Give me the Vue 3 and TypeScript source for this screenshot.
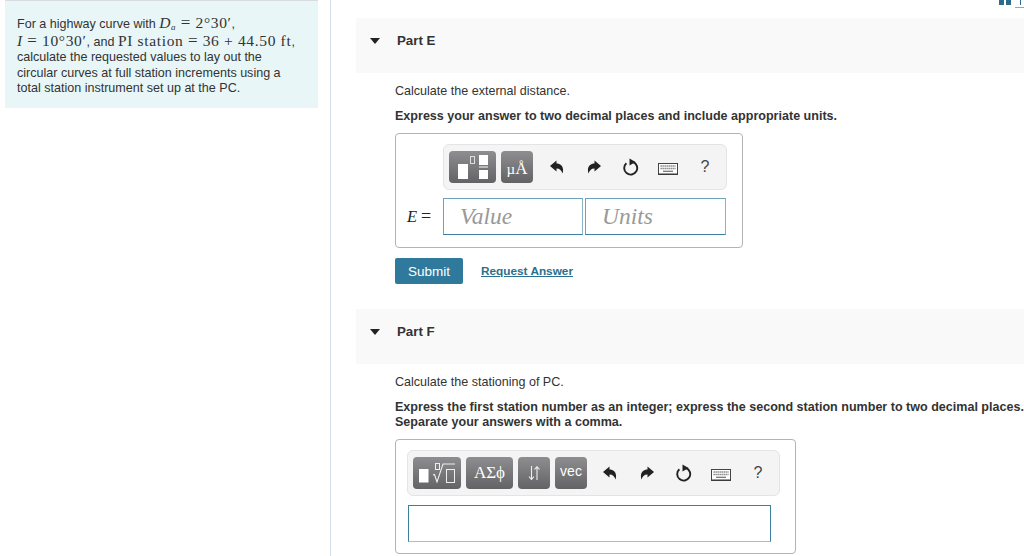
<script setup lang="ts">
interface Tool {
  name: string
}

const actions: Tool[] = [{ name: 'undo' }, { name: 'redo' }, { name: 'reset' }, { name: 'keyboard' }]
</script>

<template>
  <div class="page">
    <aside class="side">
      <div class="intro">
        <p>For a highway curve with <span class="math"><i>D</i><sub><i>a</i></sub><span class="eq">=</span>2°30′</span>,</p>
        <p><span class="math"><i>I</i><span class="eq">=</span>10°30′</span>, and <span class="math">PI station<span class="eq">=</span>36 + 44.50 ft</span>,</p>
        <p>calculate the requested values to lay out the</p>
        <p>circular curves at full station increments using a</p>
        <p>total station instrument set up at the PC.</p>
      </div>
    </aside>

    <main class="main">
      <a class="top-link"><span class="book"></span><span class="top-text"></span></a>

      <section class="part part-e">
        <header class="part-head"><span class="caret"></span><h2>Part E</h2></header>
        <div class="part-body">
          <p class="ask">Calculate the external distance.</p>
          <p class="rule">Express your answer to two decimal places and include appropriate units.</p>

          <div class="answer answer-e">
            <div class="toolbar toolbar-e">
              <button class="tbtn frac-btn" aria-label="templates">
                <svg width="30" height="24" viewBox="0 0 30 24">
                  <rect x="0" y="9" width="10" height="15" fill="#fff" />
                  <rect x="12.500" y="1.500" width="4" height="7" fill="none" stroke="#ddd" stroke-width="1" />
                  <rect x="21" y="0" width="9" height="10" fill="#fff" />
                  <rect x="21" y="11" width="9" height="2" fill="#bbb" />
                  <rect x="21" y="15" width="9" height="9" fill="#fff" />
                </svg>
              </button>
              <button class="tbtn unit-btn"><span class="mu">µ</span><span class="ang">Å</span></button>
              <div class="acts">
                <span v-for="a in actions" :key="a.name" class="act" :class="a.name">
                  <svg v-if="a.name === 'undo'" width="14" height="14" viewBox="0 0 14 14"><path d="M0 6 6.500 0.500V3.500C11 3.500 14.500 7 12.500 13.500C11.500 10.500 10 8.500 6.500 8.500V11.500Z" fill="#222" /></svg>
                  <svg v-else-if="a.name === 'redo'" width="14" height="14" viewBox="0 0 14 14"><path d="M14 6 7.500 0.500V3.500C3 3.500 -0.500 7 1.500 13.500C2.500 10.500 4 8.500 7.500 8.500V11.500Z" fill="#222" /></svg>
                  <svg v-else-if="a.name === 'reset'" width="16" height="18" viewBox="0 0 16 18"><path d="M10 4A6.500 6.500 0 1 1 3.400 5.200" fill="none" stroke="#222" stroke-width="1.900" /><path d="M6.500 0.500 12.500 4 6.500 7.500Z" fill="#222" /></svg>
                  <svg v-else width="20" height="12" viewBox="0 0 20 12"><rect x="0.500" y="0.500" width="19" height="11" fill="#fff" stroke="#444" /><path d="M2.500 3H17.500M2.500 5.500H17.500" stroke="#777" stroke-width="1.300" stroke-dasharray="1.300 0.700" /><path d="M5 8.300H15" stroke="#777" stroke-width="1.300" /><path d="M0.500 11H19.500" stroke="#333" stroke-width="1" /></svg>
                </span>
                <span class="act help">?</span>
              </div>
            </div>
            <div class="entry">
              <span class="var"><i>E</i><span class="var-eq">=</span></span>
              <div class="field value">Value</div>
              <div class="field units">Units</div>
            </div>
          </div>

          <div class="submit-row">
            <button class="submit">Submit</button>
            <a class="request">Request Answer</a>
          </div>
        </div>
      </section>

      <section class="part part-f">
        <header class="part-head"><span class="caret"></span><h2>Part F</h2></header>
        <div class="part-body">
          <p class="ask">Calculate the stationing of PC.</p>
          <p class="rule rule-f">Express the first station number as an integer; express the second station number to two decimal places.<br />Separate your answers with a comma.</p>

          <div class="answer answer-f">
            <div class="toolbar toolbar-f">
              <button class="tbtn root-btn" aria-label="templates">
                <svg width="36" height="20" viewBox="0 0 36 20">
                  <rect x="0" y="6" width="9.500" height="13.500" fill="#fff" />
                  <rect x="16.500" y="0.500" width="4" height="6" fill="none" stroke="#eee" />
                  <path d="M14 12 15.500 11.500 18 19 24 1H36" fill="none" stroke="#eee" stroke-width="1.100" />
                  <rect x="27.500" y="6.500" width="8" height="13" fill="none" stroke="#eee" />
                </svg>
              </button>
              <button class="tbtn greek-btn">ΑΣϕ</button>
              <button class="tbtn arrows-btn">
                <svg width="12" height="14" viewBox="0 0 12 14"><path d="M3.500 0V13.500M1 10.500 3.500 13.500 6 10.500M9 14V0.700M6.500 3.500 9 0.700 11.500 3.500" fill="none" stroke="#eee" stroke-width="1.100" /></svg>
              </button>
              <button class="tbtn vec-btn">vec</button>
              <div class="acts acts-f">
                <span v-for="a in actions" :key="a.name" class="act" :class="a.name">
                  <svg v-if="a.name === 'undo'" width="14" height="14" viewBox="0 0 14 14"><path d="M0 6 6.500 0.500V3.500C11 3.500 14.500 7 12.500 13.500C11.500 10.500 10 8.500 6.500 8.500V11.500Z" fill="#222" /></svg>
                  <svg v-else-if="a.name === 'redo'" width="14" height="14" viewBox="0 0 14 14"><path d="M14 6 7.500 0.500V3.500C3 3.500 -0.500 7 1.500 13.500C2.500 10.500 4 8.500 7.500 8.500V11.500Z" fill="#222" /></svg>
                  <svg v-else-if="a.name === 'reset'" width="16" height="18" viewBox="0 0 16 18"><path d="M10 4A6.500 6.500 0 1 1 3.400 5.200" fill="none" stroke="#222" stroke-width="1.900" /><path d="M6.500 0.500 12.500 4 6.500 7.500Z" fill="#222" /></svg>
                  <svg v-else width="20" height="12" viewBox="0 0 20 12"><rect x="0.500" y="0.500" width="19" height="11" fill="#fff" stroke="#444" /><path d="M2.500 3H17.500M2.500 5.500H17.500" stroke="#777" stroke-width="1.300" stroke-dasharray="1.300 0.700" /><path d="M5 8.300H15" stroke="#777" stroke-width="1.300" /><path d="M0.500 11H19.500" stroke="#333" stroke-width="1" /></svg>
                </span>
                <span class="act help">?</span>
              </div>
            </div>
            <div class="wide-field"></div>
          </div>
        </div>
      </section>
    </main>
  </div>
</template>

<style>
html, body { margin: 0; overflow: hidden; background: #fff; }
</style>

<style scoped>
.page {
  display: flex;
  width: 1024px;
  height: 556px;
  overflow: hidden;
  font-family: "Liberation Sans", Arial, sans-serif;
  color: #333;
}

.side {
  box-sizing: border-box;
  flex: 0 0 331px;
  padding: 0 12px 0 5px;
  border-right: 1px solid #d3dfe8;
}

.intro {
  box-sizing: border-box;
  height: 108px;
  padding: 14px 12px 0;
  background: #e8f6f7;
  border-top: 1px solid #d8dcdc;
  font-size: 12.55px;
  line-height: 15.500px;
}
.intro p { margin: 0; white-space: nowrap; }

.math { font-family: "Liberation Serif", "DejaVu Serif", serif; font-size: 15.500px; letter-spacing: 0.650px; }
.math sub { font-size: 9px; line-height: 0; vertical-align: -2px; }
.eq { margin: 0 4.500px; font-size: 17px; line-height: 0; }

.main {
  position: relative;
  flex: 1;
  min-width: 0;
  padding: 18px 0 0 25px;
}

.top-link { position: absolute; top: 0; left: 668px; display: flex; gap: 4px; }
.book {
  display: block;
  width: 12px;
  height: 5px;
  background: linear-gradient(90deg, #2c6b8c 5px, #fff 5px, #fff 7px, #2c6b8c 7px);
}
.top-text {
  display: block;
  width: 9px;
  height: 8px;
  box-sizing: border-box;
  border-bottom: 1px solid #8fa9b8;
  background: linear-gradient(90deg, #2c6b8c 1px, transparent 1px) 5px 0 / 100% 5px no-repeat;
}

.part-head {
  display: flex;
  align-items: flex-start;
  box-sizing: border-box;
  height: 55px;
  padding: 15px 0 0 14px;
  background: #f9f9f9;
}
.caret {
  width: 0;
  height: 0;
  margin: 5px 17px 0 0;
  border-left: 5.500px solid transparent;
  border-right: 5.500px solid transparent;
  border-top: 6px solid #222;
}
.part-head h2 { margin: 0; font-size: 13.300px; line-height: 15px; font-weight: 700; color: #333; }

.part-body { padding-left: 39px; width: 640px; }
.ask { margin: 0; padding-top: 11px; font-size: 12.55px; line-height: 15px; color: #333; white-space: nowrap; }
.rule { margin: 10px 0 0; font-size: 12.55px; line-height: 15px; font-weight: 700; color: #333; white-space: nowrap; }

.answer {
  box-sizing: border-box;
  border: 1px solid #b3b3b3;
  border-radius: 4px;
  background: #fff;
  margin-top: 9px;
}
.answer-e { width: 348px; height: 115px; padding: 10px 0 0 47px; }
.answer-f { width: 401px; height: 115px; padding: 10px 0 0 11px; }

.toolbar {
  box-sizing: border-box;
  display: flex;
  align-items: center;
  height: 46px;
  background: #f4f4f4;
  border: 1px solid #e4e4e4;
  border-radius: 6px;
  padding: 0 5px;
  gap: 5px;
}
.toolbar-e { width: 284px; }
.toolbar-f { width: 373px; }

.tbtn {
  display: flex;
  align-items: center;
  justify-content: center;
  height: 32px;
  padding: 0;
  border: 0;
  border-radius: 4px;
  background: linear-gradient(#8e8e90, #636365);
  color: #fff;
}
.frac-btn { width: 47px; }
.unit-btn { width: 32px; align-items: baseline; padding-top: 8px; box-sizing: border-box; font-family: "Liberation Serif", serif; }
.mu { font-size: 15px; }
.ang { font-size: 17px; }
.root-btn { width: 48px; }
.greek-btn { width: 47px; font-family: "Liberation Serif", serif; font-size: 17px; }
.arrows-btn { width: 32px; }
.vec-btn { width: 32px; padding-bottom: 4px; font-family: "Liberation Sans", sans-serif; font-size: 14px; }

.acts {
  display: flex;
  align-items: center;
  gap: 17px;
  padding-left: 9px;
}
.acts-f { padding-left: 8px; }
.act { display: flex; align-items: center; justify-content: center; width: 20px; }
.keyboard { padding-top: 3px; }
.help { font-size: 16px; color: #444; }

.entry { display: flex; align-items: center; margin-top: 8px; margin-left: -36px; }
.var { width: 36px; font-family: "Liberation Serif", serif; font-size: 16.500px; color: #222; white-space: nowrap; }
.var-eq { margin-left: 4px; font-size: 18px; }
.field {
  box-sizing: border-box;
  height: 37px;
  border: 1px solid;
  border-color: #6fa3bb #8ab3c6 #3d7f9f #6fa3bb;
  padding-left: 16px;
  font-family: "Liberation Serif", serif;
  font-style: italic;
  font-size: 23.500px;
  line-height: 35px;
  color: #999;
}
.value { width: 140px; margin-right: 2px; }
.units { width: 141px; }

.wide-field {
  box-sizing: border-box;
  width: 363px;
  height: 37px;
  margin-top: 9px;
  margin-left: 1px;
  border: 1px solid #3d7f9f;
  border-bottom-color: #9ec2d2;
}

.submit-row { display: flex; align-items: center; gap: 18px; margin-top: 10px; }
.submit {
  width: 68px;
  height: 26px;
  padding: 0;
  border: 0;
  border-radius: 2px;
  background: #2f7a9c;
  color: #fff;
  font-family: "Liberation Sans", sans-serif;
  font-size: 13.500px;
}
.request { font-size: 11.800px; font-weight: 700; color: #2a6f8e; text-decoration: underline; }

.part-f { margin-top: 25px; }
</style>
